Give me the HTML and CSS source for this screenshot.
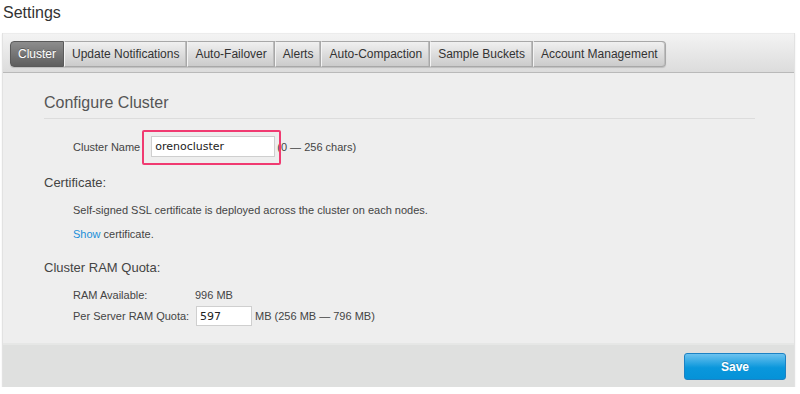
FILE: index.html
```html
<!DOCTYPE html>
<html>
<head>
<meta charset="utf-8">
<link rel="stylesheet" href="styles.css">
</head>
<body>
<h1 class="page-title">Settings</h1>
<div class="panel">
  <div class="tabbar">
    <div class="tabs">
      <span class="tab active">Cluster</span>
      <span class="tab">Update Notifications</span>
      <span class="tab">Auto-Failover</span>
      <span class="tab">Alerts</span>
      <span class="tab">Auto-Compaction</span>
      <span class="tab">Sample Buckets</span>
      <span class="tab">Account Management</span>
    </div>
  </div>
  <div class="content">
    <h2 class="section-title">Configure Cluster</h2>
    <div class="name-row">
      <label class="label">Cluster Name</label>
      <span class="name-field">
        <input class="text-input name-input" type="text" value="orenocluster">
        <span class="highlight"></span>
      </span>
      <span class="hint">(0 — 256 chars)</span>
    </div>
    <h3 class="sub-title cert-title">Certificate:</h3>
    <p class="text cert-text">Self-signed SSL certificate is deployed across the cluster on each nodes.</p>
    <p class="text show-text"><a class="link" href="#">Show</a> certificate.</p>
    <h3 class="sub-title ram-title">Cluster RAM Quota:</h3>
    <div class="ram-grid">
      <span class="text">RAM Available:</span>
      <span class="text">996 MB</span>
      <span class="text quota-label">Per Server RAM Quota:</span>
      <span class="quota-value"><input class="text-input quota-input" type="text" value="597"><span class="text">MB (256 MB — 796 MB)</span></span>
    </div>
  </div>
  <div class="footer">
    <button class="save-btn">Save</button>
  </div>
</div>
</body>
</html>
```

FILE: styles.css
```css
html, body {
  margin: 0;
  padding: 0;
  background: #ffffff;
}
body {
  font-family: "Liberation Sans", Arial, sans-serif;
  color: #333;
}
.page-title {
  margin: 3px 0 0 3px;
  font-size: 16px;
  line-height: 20px;
  font-weight: normal;
  color: #333;
  height: 30px;
}
.panel {
  margin: 0 5px 0 2px;
  border-left: 1px solid #e2e2e2;
  border-right: 1px solid #e2e2e2;
  box-shadow: 0 1px 2px rgba(0,0,0,0.08);
}
.tabbar {
  height: 40px;
  padding: 7px 0 0 7px;
  box-sizing: border-box;
  background: linear-gradient(#f3f3f3, #dcdcdc);
  border-top: 1px solid #ececec;
  border-bottom: 1px solid #b9b9b9;
}
.tabs {
  display: inline-flex;
  height: 26px;
  border-radius: 4px;
  box-shadow: 0 1px 1px rgba(0,0,0,0.15);
}
.tab {
  display: flex;
  align-items: center;
  padding: 0 7px;
  font-size: 12px;
  color: #333;
  background: linear-gradient(#f0f0f0, #cbcbcb);
  border: 1px solid #a8a8a8;
  border-left: 1px solid #f4f4f4;
  box-shadow: inset -1px 0 0 #bdbdbd;
}
.tab:first-child {
  border-left: 1px solid #8a8a8a;
  border-radius: 4px 0 0 4px;
}
.tab:last-child {
  border-radius: 0 4px 4px 0;
}
.tab.active {
  color: #fff;
  background: linear-gradient(#8d8d8d, #5e5e5e);
  border-color: #5a5a5a;
  box-shadow: none;
  text-shadow: 0 -1px 0 rgba(0,0,0,0.3);
}
.content {
  background: #eeeeee;
  padding: 20px 0 17px 41px;
  overflow: hidden;
}
.section-title {
  margin: 0 39px 0 0;
  padding-bottom: 5px;
  font-size: 16px;
  line-height: 20px;
  font-weight: normal;
  color: #555;
  border-bottom: 1px solid #dcdcdc;
}
.name-row {
  display: flex;
  align-items: center;
  margin: 17px 0 0 29px;
  height: 21px;
}
.label {
  font-size: 11px;
  color: #444;
}
.name-field {
  position: relative;
  display: inline-block;
  margin-left: 11px;
  height: 21px;
}
.text-input {
  box-sizing: border-box;
  border: 1px solid #cfcfcf;
  background: #fff;
  font-family: "DejaVu Sans", sans-serif;
  font-size: 11px;
  color: #222;
  outline: none;
  margin: 0;
}
.name-input {
  width: 124px;
  height: 21px;
  padding: 0 0 0 3px;
}
.highlight {
  position: absolute;
  left: -9px;
  top: -6px;
  right: -6px;
  bottom: -8px;
  border: 2px solid #f03a71;
  border-radius: 2px;
  pointer-events: none;
}
.hint {
  font-size: 11px;
  color: #444;
  margin-left: 2px;
}
.sub-title {
  margin: 0;
  font-size: 13px;
  line-height: 16px;
  font-weight: normal;
  color: #444;
}
.cert-title { margin-top: 18px; }
.ram-title { margin-top: 19px; }
.text {
  font-size: 11px;
  line-height: 14px;
  color: #444;
}
p.text {
  margin: 0 0 0 29px;
}
.cert-text { margin-top: 12px !important; }
.show-text { margin-top: 10px !important; }
.link {
  color: #1b8fd9;
  text-decoration: none;
}
.ram-grid {
  display: grid;
  grid-template-columns: 122px auto;
  row-gap: 4px;
  align-items: center;
  margin: 12px 0 0 29px;
}
.quota-value {
  display: flex;
  align-items: center;
}
.quota-input {
  width: 56px;
  height: 20px;
  padding: 0 0 0 3px;
  margin-right: 3px;
  margin-left: 1px;
}
.footer {
  display: flex;
  justify-content: flex-end;
  height: 44px;
  box-sizing: border-box;
  padding: 8px 8px 0 0;
  background: #dfe0df;
  border-top: 2px solid #e6e7e6;
}
.save-btn {
  width: 102px;
  height: 27px;
  border: 1px solid #1c82c4;
  border-radius: 3px;
  background: linear-gradient(#6cc2ef, #0a97dc 55%, #0592d8);
  color: #fff;
  font-family: "Liberation Sans", Arial, sans-serif;
  font-weight: bold;
  font-size: 12px;
  text-shadow: 0 -1px 0 rgba(0,0,0,0.2);
  padding: 0;
}
```
